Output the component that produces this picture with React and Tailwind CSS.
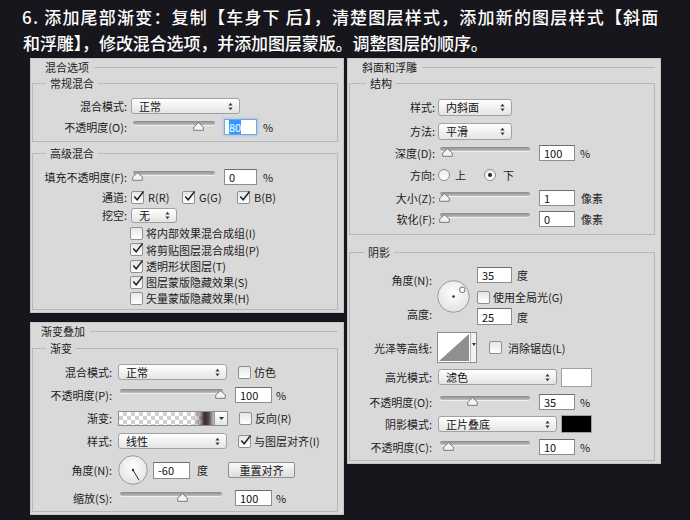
import React from "react";

const lbl = "text-right text-[11px] leading-[14px] text-[#1c1c1c] whitespace-nowrap shrink-0";
const txt = "text-[11px] leading-[14px] text-[#1c1c1c] whitespace-nowrap";

function UpDown() {
  return (
    <svg width="5" height="9" viewBox="0 0 5 9" className="shrink-0">
      <path d="M2.5 0.8 L4.6 3.6 L0.4 3.6 Z M0.4 5.4 L4.6 5.4 L2.5 8.2 Z" fill="#3a3a3a" />
    </svg>
  );
}

function Select({ className = "", text }) {
  return (
    <div
      className={`flex items-center justify-between shrink-0 pl-[7px] pr-[6px] border border-[#a1a1a1] rounded-[3px] bg-[linear-gradient(#ffffff,#e4e4e4)] text-[11px] leading-[14px] text-[#111] ${className}`}
    >
      <span>{text}</span>
      <UpDown />
    </div>
  );
}

function Input({ className = "", focus = false, children }) {
  return (
    <div
      className={`flex items-center shrink-0 pl-[4px] bg-white border text-[11px] leading-[14px] text-[#111] ${
        focus ? "border-[#7aa6da] shadow-[0_0_2px_1px_#a9c8ee]" : "border-[#8d8d8d] border-t-[#6e6e6e]"
      } ${className}`}
    >
      {children}
    </div>
  );
}

function Check({ checked }) {
  return (
    <div className="relative w-[13px] h-[13px] shrink-0 border border-[#8f8f8f] rounded-[2px] bg-[linear-gradient(#e6e6e6,#ffffff)]">
      {checked && (
        <svg className="absolute left-[0px] top-[-2px]" width="13" height="13" viewBox="0 0 13 13">
          <path d="M2.3 6.6 L5.2 9.8 L11.6 1.4" fill="none" stroke="#1f1f1f" strokeWidth="1.5" />
        </svg>
      )}
    </div>
  );
}

function Radio({ checked }) {
  return (
    <div className="w-[12px] h-[12px] shrink-0 rounded-full border border-[#8f8f8f] bg-[linear-gradient(#e9e9e9,#ffffff)] flex items-center justify-center">
      {checked && <div className="w-[4px] h-[4px] rounded-full bg-[#222]" />}
    </div>
  );
}

function Slider({ className = "", pos }) {
  return (
    <div className={`relative h-[14px] shrink-0 ${className}`}>
      <div className="absolute left-0 right-0 top-[1px] h-[4px] rounded-[2px] bg-[linear-gradient(#8a8a8a,#bebebe)] shadow-[0_1px_0_#efefef]" />
      <svg className="absolute top-[2px]" style={{ left: pos - 5 }} width="11" height="9" viewBox="0 0 11 9">
        <path d="M5.5 0.7 L10.3 5 L10.3 8.3 L0.7 8.3 L0.7 5 Z" fill="#f3f3f3" stroke="#7a7a7a" strokeWidth="1" />
      </svg>
    </div>
  );
}

function Legend({ className = "", children }) {
  return <legend className={`px-[4px] text-[11px] leading-[14px] text-[#1c1c1c] ${className}`}>{children}</legend>;
}

function TitleRow({ className = "", children }) {
  return (
    <div className={`flex items-center h-[18px] pr-[6px] ${className}`}>
      <span className="text-[11px] leading-[14px] text-[#1c1c1c]">{children}</span>
      <div className="flex-1 h-px bg-[#b7b7b7] ml-[5px]" />
    </div>
  );
}

const panel = "bg-[#d9d9d9] shadow-[inset_0_0_0_1px_#c5c5c5]";
const fs = "border border-[#b8b8b8] min-w-0";

export default function App() {
  return (
    <div className="w-[690px] h-[520px] bg-[#17161c] overflow-hidden font-['Noto_Sans_CJK_SC','Noto_Sans',sans-serif]">
      <div className="h-[58px] pl-[22px] pt-[4px] text-white text-[17px] leading-[26px] font-medium whitespace-nowrap">
        <div className="tracking-[1.2px]">6. 添加尾部渐变：复制【车身下 后】，清楚图层样式，添加新的图层样式【斜面</div>
        <div className="tracking-[-0.1px] pl-[1px]">和浮雕】，修改混合选项，并添加图层蒙版。调整图层的顺序。</div>
      </div>

      <div className="flex pl-[30px]">
        {/* LEFT COLUMN */}
        <div className="w-[314px] flex flex-col">
          {/* Panel 1 */}
          <div className={`h-[255px] ${panel}`}>
            <TitleRow className="pl-[15px]">混合选项</TitleRow>
            <fieldset className={`ml-[2px] mr-[6px] pb-[4px] ${fs}`}>
              <Legend className="ml-[13px]">常规混合</Legend>
              <div className="flex items-center h-[20px] mt-[6px]">
                <div className={`w-[94px] ${lbl}`}>混合模式:</div>
                <Select className="ml-[4px] w-[109px] h-[16px]" text="正常" />
              </div>
              <div className="flex items-center h-[20px] mt-[1px]">
                <div className={`w-[94px] ${lbl}`}>不透明度(O):</div>
                <Slider className="ml-[6px] w-[82px]" pos={65} />
                <Input focus className="ml-[9px] w-[33px] h-[16px]">
                  <span className="bg-[#3399ff] text-white">80</span>
                </Input>
                <span className={`ml-[6px] ${txt}`}>%</span>
              </div>
            </fieldset>
            <fieldset className={`mt-[4px] ml-[2px] mr-[6px] pb-[3px] ${fs}`}>
              <Legend className="ml-[13px]">高级混合</Legend>
              <div className="flex items-center h-[20px] mt-[7px]">
                <div className={`w-[94px] ${lbl}`}>填充不透明度(F):</div>
                <Slider className="ml-[6px] w-[82px]" pos={4} />
                <Input className="ml-[9px] w-[33px] h-[16px]">0</Input>
                <span className={`ml-[6px] ${txt}`}>%</span>
              </div>
              <div className="flex items-center h-[18px] mt-[1px]">
                <div className={`w-[94px] ${lbl}`}>通道:</div>
                <div className="ml-[4px] w-[51px] flex items-center">
                  <Check checked />
                  <span className={`ml-[4px] ${txt}`}>R(R)</span>
                </div>
                <div className="w-[55px] flex items-center">
                  <Check checked />
                  <span className={`ml-[4px] ${txt}`}>G(G)</span>
                </div>
                <div className="flex items-center">
                  <Check checked />
                  <span className={`ml-[4px] ${txt}`}>B(B)</span>
                </div>
              </div>
              <div className="flex items-center h-[18px]">
                <div className={`w-[94px] ${lbl}`}>挖空:</div>
                <Select className="ml-[4px] w-[46px] h-[15px]" text="无" />
              </div>
              <div className="flex items-center h-[16px] mt-[1px] pl-[97px]">
                <Check />
                <span className={`ml-[3px] ${txt}`}>将内部效果混合成组(I)</span>
              </div>
              <div className="flex items-center h-[17px] pl-[97px]">
                <Check checked />
                <span className={`ml-[3px] ${txt}`}>将剪贴图层混合成组(P)</span>
              </div>
              <div className="flex items-center h-[16px] pl-[97px]">
                <Check checked />
                <span className={`ml-[3px] ${txt}`}>透明形状图层(T)</span>
              </div>
              <div className="flex items-center h-[16px] pl-[97px]">
                <Check checked />
                <span className={`ml-[3px] ${txt}`}>图层蒙版隐藏效果(S)</span>
              </div>
              <div className="flex items-center h-[16px] pl-[97px]">
                <Check />
                <span className={`ml-[3px] ${txt}`}>矢量蒙版隐藏效果(H)</span>
              </div>
            </fieldset>
          </div>

          {/* Panel 2 */}
          <div className={`mt-[9px] h-[193px] ${panel}`}>
            <TitleRow className="pl-[11px]">渐变叠加</TitleRow>
            <fieldset className={`mt-[1px] ml-[2px] mr-[6px] pb-[3px] ${fs}`}>
              <Legend className="ml-[13px]">渐变</Legend>
              <div className="flex items-center h-[20px] mt-[7px]">
                <div className={`w-[79px] ${lbl}`}>混合模式:</div>
                <Select className="ml-[6px] w-[109px] h-[16px]" text="正常" />
                <div className="ml-[11px]"><Check /></div>
                <span className={`ml-[3px] ${txt}`}>仿色</span>
              </div>
              <div className="flex items-center h-[20px] mt-[3px]">
                <div className={`w-[79px] ${lbl}`}>不透明度(P):</div>
                <Slider className="ml-[8px] w-[103px]" pos={100} />
                <Input className="ml-[12px] w-[37px] h-[16px]">100</Input>
                <span className={`ml-[4px] ${txt}`}>%</span>
              </div>
              <div className="flex items-center h-[20px] mt-[3px]">
                <div className={`w-[79px] ${lbl}`}>渐变:</div>
                <div className="ml-[6px] flex h-[15px] border border-[#8d8d8d] shrink-0">
                  <div className="relative w-[95px] h-full bg-[repeating-conic-gradient(#d2d2d2_0%_25%,#ffffff_0%_50%)] bg-[length:8px_8px]">
                    <div className="absolute inset-0 bg-[linear-gradient(to_right,#00000000_0%,#00000000_78%,#3c2c2f66_85%,#3b2b2e_90%,#4e3f42_94%,#c9c4c5_100%)]" />
                  </div>
                  <div className="w-[13px] h-full border-l border-[#9a9a9a] bg-[linear-gradient(#ffffff,#e4e4e4)] flex items-center justify-center">
                    <svg width="5" height="3" viewBox="0 0 5 3">
                      <path d="M0 0 L5 0 L2.5 3 Z" fill="#333" />
                    </svg>
                  </div>
                </div>
                <div className="ml-[11px]"><Check /></div>
                <span className={`ml-[3px] ${txt}`}>反向(R)</span>
              </div>
              <div className="flex items-center h-[20px] mt-[3px]">
                <div className={`w-[79px] ${lbl}`}>样式:</div>
                <Select className="ml-[6px] w-[109px] h-[16px]" text="线性" />
                <div className="ml-[11px]"><Check checked /></div>
                <span className={`ml-[3px] ${txt}`}>与图层对齐(I)</span>
              </div>
              <div className="flex items-center h-[30px] mt-[4px]">
                <div className={`w-[79px] ${lbl}`}>角度(N):</div>
                <svg className="ml-[6px] shrink-0" width="30" height="30" viewBox="0 0 30 30">
                  <defs>
                    <radialGradient id="dg1" cx="50%" cy="40%" r="60%">
                      <stop offset="0%" stopColor="#ffffff" />
                      <stop offset="100%" stopColor="#e2e2e2" />
                    </radialGradient>
                  </defs>
                  <circle cx="15" cy="15" r="14.3" fill="url(#dg1)" stroke="#9a9a9a" strokeWidth="1" />
                  <line x1="15" y1="15" x2="21" y2="25.2" stroke="#2a2a2a" strokeWidth="1" />
                  <circle cx="15" cy="15" r="1.2" fill="#2a2a2a" />
                </svg>
                <Input className="ml-[5px] w-[37px] h-[17px]">-60</Input>
                <span className={`ml-[7px] ${txt}`}>度</span>
                <div className="ml-[20px] w-[67px] h-[16px] shrink-0 border border-[#8f8f8f] rounded-[2px] bg-[linear-gradient(#fbfbfb,#dcdcdc)] flex items-center justify-center text-[11px] leading-[14px] text-[#111]">
                  重置对齐
                </div>
              </div>
              <div className="flex items-center h-[20px] mt-[3px]">
                <div className={`w-[79px] ${lbl}`}>缩放(S):</div>
                <Slider className="ml-[8px] w-[102px]" pos={62} />
                <Input className="ml-[13px] w-[37px] h-[16px]">100</Input>
                <span className={`ml-[4px] ${txt}`}>%</span>
              </div>
            </fieldset>
          </div>
        </div>

        {/* RIGHT PANEL */}
        <div className={`ml-[3px] w-[314px] h-[406px] ${panel}`}>
          <TitleRow className="pl-[15px]">斜面和浮雕</TitleRow>
          <fieldset className={`ml-[2px] mr-[6px] pb-[5px] ${fs}`}>
            <Legend className="ml-[16px]">结构</Legend>
            <div className="flex items-center h-[20px] mt-[7px]">
              <div className={`w-[85px] ${lbl}`}>样式:</div>
              <Select className="ml-[3px] w-[74px] h-[17px]" text="内斜面" />
            </div>
            <div className="flex items-center h-[20px] mt-[4px]">
              <div className={`w-[85px] ${lbl}`}>方法:</div>
              <Select className="ml-[3px] w-[74px] h-[17px]" text="平滑" />
            </div>
            <div className="flex items-center h-[20px] mt-[2px]">
              <div className={`w-[85px] ${lbl}`}>深度(D):</div>
              <Slider className="ml-[5px] w-[90px]" pos={7} />
              <Input className="ml-[9px] w-[36px] h-[16px]">100</Input>
              <span className={`ml-[5px] ${txt}`}>%</span>
            </div>
            <div className="flex items-center h-[20px] mt-[2px]">
              <div className={`w-[85px] ${lbl}`}>方向:</div>
              <div className="ml-[3px]"><Radio /></div>
              <span className={`ml-[5px] ${txt}`}>上</span>
              <div className="ml-[18px]"><Radio checked /></div>
              <span className={`ml-[7px] ${txt}`}>下</span>
            </div>
            <div className="flex items-center h-[20px] mt-[3px]">
              <div className={`w-[85px] ${lbl}`}>大小(Z):</div>
              <Slider className="ml-[5px] w-[90px]" pos={4} />
              <Input className="ml-[9px] w-[36px] h-[16px]">1</Input>
              <span className={`ml-[6px] ${txt}`}>像素</span>
            </div>
            <div className="flex items-center h-[20px] mt-[1px]">
              <div className={`w-[85px] ${lbl}`}>软化(F):</div>
              <Slider className="ml-[5px] w-[90px]" pos={4} />
              <Input className="ml-[9px] w-[36px] h-[16px]">0</Input>
              <span className={`ml-[6px] ${txt}`}>像素</span>
            </div>
          </fieldset>

          <fieldset className={`mt-[10px] ml-[2px] mr-[6px] pb-[3px] ${fs}`}>
            <Legend className="ml-[14px]">阴影</Legend>
            <div className="flex h-[63px] mt-[6px]">
              <div className="w-[82px] shrink-0 flex flex-col">
                <div className={`h-[16px] mt-[7px] flex items-center justify-end ${lbl}`}>角度(N):</div>
                <div className={`h-[16px] mt-[18px] flex items-center justify-end ${lbl}`}>高度:</div>
              </div>
              <svg className="ml-[5px] mt-[15px] shrink-0" width="33" height="33" viewBox="0 0 33 33">
                <defs>
                  <radialGradient id="dg2" cx="50%" cy="40%" r="60%">
                    <stop offset="0%" stopColor="#ffffff" />
                    <stop offset="100%" stopColor="#e2e2e2" />
                  </radialGradient>
                </defs>
                <circle cx="16.5" cy="16.5" r="15.8" fill="url(#dg2)" stroke="#9a9a9a" strokeWidth="1" />
                <circle cx="16.5" cy="16.5" r="1.3" fill="#2a2a2a" />
                <circle cx="25.3" cy="9.8" r="2.8" fill="#ffffff" stroke="#6a6a6a" strokeWidth="1" />
              </svg>
              <div className="ml-[7px] flex flex-col">
                <div className="flex items-center mt-[2px]">
                  <Input className="w-[35px] h-[16px]">35</Input>
                  <span className={`ml-[5px] ${txt}`}>度</span>
                </div>
                <div className="flex items-center h-[14px] mt-[7px]">
                  <Check />
                  <span className={`ml-[3px] ${txt}`}>使用全局光(G)</span>
                </div>
                <div className="flex items-center mt-[4px]">
                  <Input className="w-[35px] h-[17px]">25</Input>
                  <span className={`ml-[5px] ${txt}`}>度</span>
                </div>
              </div>
            </div>
            <div className="flex items-center h-[31px] mt-[4px]">
              <div className={`w-[82px] ${lbl}`}>光泽等高线:</div>
              <div className="ml-[5px] flex h-[31px] border border-[#8d8d8d] bg-white shrink-0">
                <svg width="32" height="29" viewBox="0 0 32 29">
                  <polygon points="1,28 31,1 31,28" fill="#8f8f8f" />
                </svg>
                <div className="w-[6px] border-l border-[#b3b3b3] bg-[#f3f3f3] flex justify-center pt-[10px]">
                  <svg width="4" height="3" viewBox="0 0 4 3">
                    <path d="M0 0 L4 0 L2 3 Z" fill="#333" />
                  </svg>
                </div>
              </div>
              <div className="ml-[12px]"><Check /></div>
              <span className={`ml-[6px] ${txt}`}>消除锯齿(L)</span>
            </div>
            <div className="flex items-center h-[20px] mt-[4px]">
              <div className={`w-[82px] ${lbl}`}>高光模式:</div>
              <Select className="ml-[6px] w-[119px] h-[16px]" text="滤色" />
              <div className="ml-[4px] w-[31px] h-[19px] shrink-0 bg-white border border-[#a0a0a0]" />
            </div>
            <div className="flex items-center h-[20px] mt-[5px]">
              <div className={`w-[82px] ${lbl}`}>不透明度(O):</div>
              <Slider className="ml-[8px] w-[90px]" pos={32} />
              <Input className="ml-[9px] w-[36px] h-[16px]">35</Input>
              <span className={`ml-[5px] ${txt}`}>%</span>
            </div>
            <div className="flex items-center h-[20px] mt-[2px]">
              <div className={`w-[82px] ${lbl}`}>阴影模式:</div>
              <Select className="ml-[6px] w-[119px] h-[16px]" text="正片叠底" />
              <div className="ml-[4px] w-[31px] h-[18px] shrink-0 bg-black border border-[#a0a0a0]" />
            </div>
            <div className="flex items-center h-[20px] mt-[3px]">
              <div className={`w-[82px] ${lbl}`}>不透明度(C):</div>
              <Slider className="ml-[8px] w-[90px]" pos={8} />
              <Input className="ml-[9px] w-[36px] h-[16px]">10</Input>
              <span className={`ml-[5px] ${txt}`}>%</span>
            </div>
          </fieldset>
        </div>
      </div>
    </div>
  );
}
